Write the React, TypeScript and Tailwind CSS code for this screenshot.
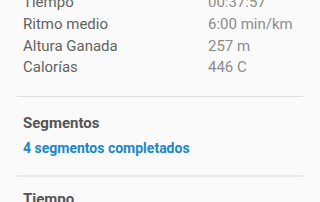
const stats = [
  { label: 'Tiempo', value: '00:37:57' },
  { label: 'Ritmo medio', value: '6:00 min/km' },
  { label: 'Altura Ganada', value: '257 m' },
  { label: 'Calorías', value: '446 C' },
];

export default function App() {
  return (
    <div
      className="h-[202px] w-[320px] overflow-hidden bg-[#fafafa] px-[17px]"
      style={{ fontFamily: 'Roboto, "Noto Sans", sans-serif' }}
    >
      <div className="mt-[-8px] px-[6px]">
        {stats.map((s) => (
          <div key={s.label} className="flex h-[21.8px] text-[15px] leading-[21.8px]">
            <span className="w-[185px] text-[#636363]">{s.label}</span>
            <span className="text-[#8c8c8c]">{s.value}</span>
          </div>
        ))}
      </div>
      <div className="mt-[16.5px] h-px bg-[#e0e0e0]" />
      <div className="px-[6px] pt-[16px]">
        <h2 className="text-[15px] font-bold leading-[20px] text-[#555555]">Segmentos</h2>
        <p className="mt-[5px] text-[14px] font-bold leading-[20px] text-[#1b87c5]">
          4 segmentos completados
        </p>
      </div>
      <div className="mt-[17px] h-[2px] bg-[#e8e8e8]" />
      <div className="px-[6px] pt-[12.5px]">
        <h2 className="text-[15px] font-bold leading-[20px] text-[#555555]">Tiempo</h2>
      </div>
    </div>
  );
}
